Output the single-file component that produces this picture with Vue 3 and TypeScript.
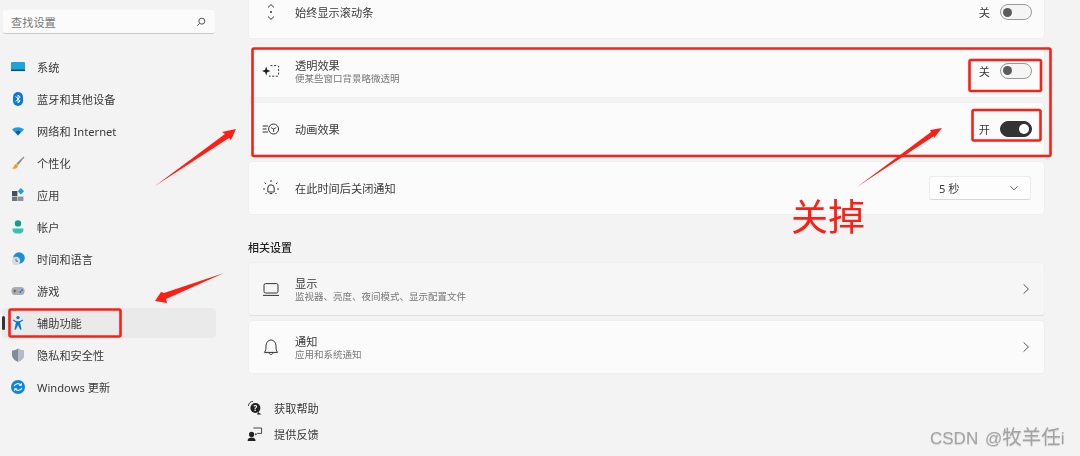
<template>
  <div class="page">
    <div class="layout">
      <aside class="sidebar">
        <div class="search">
          <span>查找设置</span>
          <svg width="10" height="10" viewBox="0 0 12 12" fill="none" stroke="#555" stroke-width="1.2">
            <circle cx="7" cy="5" r="3.6" />
            <path d="M4.4 7.6 1.4 10.6" />
          </svg>
        </div>
        <nav class="nav">
          <a v-for="item in navItems" :key="item.key" class="nav-item" :class="{ active: item.key === 'access' }">
            <svg class="nav-icon" width="16" height="16" viewBox="0 0 16 16">
              <template v-if="item.key === 'system'">
                <rect x="1" y="3" width="14" height="9" rx="1" fill="#1ea5d6" />
                <rect x="1" y="10.5" width="14" height="1.6" fill="#17506e" />
              </template>
              <template v-else-if="item.key === 'bluetooth'">
                <rect x="3" y="1" width="10" height="14" rx="5" fill="#0a78e0" />
                <path d="M5.6 5.4 10.2 10 8 12V4l2.2 2-4.6 4.6" fill="none" stroke="#fff" stroke-width="1" />
              </template>
              <template v-else-if="item.key === 'network'">
                <path d="M2 6.6C5.6 3.4 10.4 3.4 14 6.6L8 12.6Z" fill="#1b9de2" />
                <path d="M5.2 8.8C7 7.4 9 7.4 10.8 8.8L8 12.6Z" fill="#0b5f9e" />
              </template>
              <template v-else-if="item.key === 'personal'">
                <path d="M13.6 1.4 6.4 8.6 8 10.2 14.4 2.2Z" fill="#8a8f96" />
                <path d="M6 9C3.8 9.4 4.6 12.4 2 13.2 4.8 14.6 8.2 13.4 7.8 10.6Z" fill="#f09a2a" />
              </template>
              <template v-else-if="item.key === 'apps'">
                <rect x="2" y="4" width="5.4" height="5" fill="#4a5058" />
                <rect x="2" y="9.6" width="5.4" height="4.4" fill="#6c737b" />
                <rect x="8" y="9.6" width="5.4" height="4.4" fill="#8d949b" />
                <path d="M10.8 1 14 4.2 10.8 7.4 7.8 4.2Z" fill="#1b9de2" />
              </template>
              <template v-else-if="item.key === 'account'">
                <circle cx="8" cy="4.4" r="3.2" fill="#12a08c" />
                <path d="M2.6 9.4H13.4V11C13.4 13.8 10.8 14.6 8 14.6S2.6 13.8 2.6 11Z" fill="#35c4ae" />
              </template>
              <template v-else-if="item.key === 'time'">
                <circle cx="9" cy="7" r="5.8" fill="#1b8fd6" />
                <circle cx="6" cy="10" r="4.2" fill="#d8dde2" />
                <path d="M6 7.6V10.2H8" fill="none" stroke="#555" stroke-width="0.8" />
              </template>
              <template v-else-if="item.key === 'games'">
                <rect x="1.5" y="4" width="13" height="8" rx="3.6" fill="#a9aeb4" />
                <path d="M3.4 8H6.2M4.8 6.6V9.4" stroke="#555" stroke-width="0.9" />
                <circle cx="10.4" cy="9" r="0.9" fill="#1b78c8" />
                <circle cx="12" cy="7.2" r="0.9" fill="#1b78c8" />
              </template>
              <template v-else-if="item.key === 'access'">
                <circle cx="8" cy="2.6" r="1.7" fill="#0a78d4" />
                <path d="M3.2 4.6 6.6 6.2H9.4L12.8 4.6 13.2 5.6 10 7.6 11.6 14.4 10.2 14.8 8 10 5.8 14.8 4.4 14.4 6 7.6 2.8 5.6Z" fill="#0a78d4" />
              </template>
              <template v-else-if="item.key === 'privacy'">
                <path d="M8 1.4C10 3 12 3.4 14 3.4V8C14 11.4 11 13.6 8 14.8 5 13.6 2 11.4 2 8V3.4C4 3.4 6 3 8 1.4Z" fill="#7f8c99" />
                <path d="M8 1.4C10 3 12 3.4 14 3.4V8C14 11.4 11 13.6 8 14.8Z" fill="#b4bcc4" />
              </template>
              <template v-else>
                <circle cx="8" cy="8" r="7" fill="#0a86e0" />
                <path d="M4.2 7.2C4.8 4.6 8.8 3.6 11 6.2M11.8 8.8C11.2 11.4 7.2 12.4 5 9.8" fill="none" stroke="#fff" stroke-width="1.2" />
                <path d="M11.8 3.8V6.8H8.8ZM4.2 12.2V9.2H7.2Z" fill="#fff" />
              </template>
            </svg>
            <span>{{ item.label }}</span>
          </a>
        </nav>
      </aside>

      <main class="content">
        <section class="card-list">
          <div v-for="row in settingRows" :key="row.title" class="card">
            <svg class="card-icon" width="20" height="20" viewBox="0 0 20 20" fill="none" stroke="#333" stroke-width="1">
              <template v-if="row.icon === 'scroll'">
                <path d="M7 5.4 10 2.6 13 5.4M7 14.6 10 17.4 13 14.6" />
                <circle cx="10" cy="10" r="1" fill="#333" stroke="none" />
              </template>
              <template v-else-if="row.icon === 'clear'">
                <path d="M5.2 5.4 6.3 8.7 9.4 10 6.3 11.3 5.2 14.6 4.1 11.3 1 10 4.1 8.7Z" fill="#222" stroke="none" />
                <path d="M9.5 4.6H16.4Q17.6 4.6 17.6 5.8V13.8Q17.6 15.2 16.4 15.2H8" stroke-dasharray="2 1.6" />
              </template>
              <template v-else-if="row.icon === 'motion'">
                <path d="M1.6 7H7M1.6 10H5.6M1.6 13H7" />
                <circle cx="12.6" cy="10" r="5" />
                <path d="M10 8.6 12.6 10 15.2 8.6M12.6 10V13" stroke-width="0.9" />
              </template>
              <template v-else>
                <path d="M6.8 14V10A3.2 3.2 0 0 1 13.2 10V14ZM8.6 15.6H11.4" />
                <path d="M10 2V4M3.6 4.6 5 6M16.4 4.6 15 6M2 11H4M16 11H18M4.6 16 5.6 15M15.4 16 14.4 15" />
              </template>
            </svg>
            <div class="card-text">
              <div class="card-title">{{ row.title }}</div>
              <div v-if="row.sub" class="card-sub">{{ row.sub }}</div>
            </div>
            <div v-if="row.toggle" class="toggle-wrap">
              <span>{{ row.toggle === 'on' ? '开' : '关' }}</span>
              <span class="toggle" :class="row.toggle"><i></i></span>
            </div>
            <div v-else-if="row.select" class="select">
              <span>{{ row.select }}</span>
              <svg width="10" height="10" viewBox="0 0 10 10" fill="none" stroke="#666" stroke-width="1"><path d="M1.4 3.4 5 6.8 8.6 3.4" /></svg>
            </div>
          </div>
        </section>

        <h3 class="heading">相关设置</h3>

        <section class="card-list related">
          <div v-for="row in relatedRows" :key="row.title" class="card" :class="{ hover: row.icon === 'laptop' }">
            <svg class="card-icon" width="20" height="20" viewBox="0 0 20 20" fill="none" stroke="#333" stroke-width="1">
              <template v-if="row.icon === 'laptop'">
                <rect x="3" y="4.6" width="14" height="9.4" rx="1.6" />
                <path d="M2 16.4H18" />
              </template>
              <template v-else>
                <path d="M3.4 15.4C4.8 13.6 5 12 5 9.2 5 6 7 3 10 3S15 6 15 9.2C15 12 15.2 13.6 16.6 15.4Z" />
                <path d="M8 15.6C8 18 12 18 12 15.6" />
              </template>
            </svg>
            <div class="card-text">
              <div class="card-title">{{ row.title }}</div>
              <div class="card-sub">{{ row.sub }}</div>
            </div>
            <svg class="chevron" width="12" height="12" viewBox="0 0 12 12" fill="none" stroke="#555" stroke-width="1"><path d="M3.6 1.4 8.4 6 3.6 10.6" /></svg>
          </div>
        </section>

        <div class="links">
          <a class="link">
            <svg width="16" height="16" viewBox="0 0 16 16">
              <path d="M1.4 6C1.6 3 3.6 1.4 6 1.4" fill="none" stroke="#333" stroke-width="0.9" />
              <circle cx="8.4" cy="8" r="5" fill="#222" />
              <path d="M11 12 14.6 14.6H10Z" fill="#222" />
              <text x="8.4" y="10.6" class="help-mark">?</text>
            </svg>
            <span>获取帮助</span>
          </a>
          <a class="link">
            <svg width="16" height="16" viewBox="0 0 16 16">
              <circle cx="4.6" cy="8.4" r="2.6" fill="#222" />
              <path d="M0.6 15C0.6 12.4 2.4 11.4 4.6 11.4S8.6 12.4 8.6 15Z" fill="#222" />
              <path d="M6.4 2H14.6V7.4H10.4L8.6 9V7.4" fill="none" stroke="#333" stroke-width="0.9" />
            </svg>
            <span>提供反馈</span>
          </a>
        </div>
      </main>
    </div>

    <!-- hand drawn annotations on top of the screenshot -->
    <svg class="marks" width="1080" height="456" viewBox="0 0 1080 456">
      <g fill="none" stroke="#ff1e14" stroke-width="2.6" stroke-linejoin="round">
        <rect x="252.5" y="48.5" width="798" height="107.5" rx="1.5" />
        <rect x="969.5" y="60" width="71.5" height="31" rx="1.5" />
        <rect x="972.5" y="110" width="68" height="30.5" rx="1.5" />
        <rect x="9.5" y="309.5" width="111" height="27" rx="1.5" />
      </g>
      <g fill="#ff1e14">
        <polygon points="155,186 225,134 222,132 236,129 231,140 229,138" />
        <polygon points="224,273 164,293 161,292 155,301 167,303 166,299" />
        <polygon points="857,187 931,132 930,130 942,128 934,138 934,136" />
      </g>
    </svg>
    <div class="note">关掉</div>
    <div class="watermark">CSDN @<span>牧羊任</span>i</div>
  </div>
</template>

<script setup lang="ts">
interface NavItem {
  key: string
  label: string
}

interface SettingRow {
  icon: string
  title: string
  sub?: string
  toggle?: 'on' | 'off'
  select?: string
}

const navItems: NavItem[] = [
  { key: 'system', label: '系统' },
  { key: 'bluetooth', label: '蓝牙和其他设备' },
  { key: 'network', label: '网络和 Internet' },
  { key: 'personal', label: '个性化' },
  { key: 'apps', label: '应用' },
  { key: 'account', label: '帐户' },
  { key: 'time', label: '时间和语言' },
  { key: 'games', label: '游戏' },
  { key: 'access', label: '辅助功能' },
  { key: 'privacy', label: '隐私和安全性' },
  { key: 'update', label: 'Windows 更新' }
]

const settingRows: SettingRow[] = [
  { icon: 'scroll', title: '始终显示滚动条', toggle: 'off' },
  { icon: 'clear', title: '透明效果', sub: '便某些窗口背景略微透明', toggle: 'off' },
  { icon: 'motion', title: '动画效果', toggle: 'on' },
  { icon: 'sun', title: '在此时间后关闭通知', select: '5 秒' }
]

const relatedRows: SettingRow[] = [
  { icon: 'laptop', title: '显示', sub: '监视器、亮度、夜间模式、显示配置文件' },
  { icon: 'bell', title: '通知', sub: '应用和系统通知' }
]
</script>

<style scoped>
.page {
  position: relative;
  width: 1080px;
  height: 456px;
  overflow: hidden;
  background: #f3f3f3;
  color: #3a3a3a;
  font-family: "Noto Sans", "Noto Sans CJK SC", sans-serif;
  font-size: 11.2px;
}

.layout {
  display: flex;
  filter: blur(0.45px);
}

.sidebar {
  width: 248px;
  flex: none;
  box-sizing: border-box;
  padding: 10px 32px 0 2px;
}

.search {
  display: flex;
  align-items: center;
  justify-content: space-between;
  height: 24px;
  margin: 0 1px;
  padding: 0 9px 0 8px;
  box-sizing: border-box;
  background: #fbfbfb;
  border-bottom: 1px solid #c9c9c9;
  border-radius: 3px;
  color: #777;
  font-size: 11.2px;
}

.nav {
  display: flex;
  flex-direction: column;
  gap: 2px;
  margin-top: 18px;
}

.nav-item {
  position: relative;
  display: flex;
  align-items: center;
  height: 30px;
  padding-left: 8px;
  border-radius: 4px;
}

.nav-item.active {
  background: #eaeaea;
}

.nav-item.active::before {
  content: '';
  position: absolute;
  left: 0;
  top: 8px;
  width: 2.5px;
  height: 14px;
  border-radius: 2px;
  background: #333;
}

.nav-icon {
  flex: none;
  margin-right: 11px;
}

.content {
  width: 797px;
  margin-top: -15px;
}

.card-list {
  display: flex;
  flex-direction: column;
  gap: 4.5px;
}

.related {
  gap: 4px;
}

.card {
  display: flex;
  align-items: center;
  height: 54px;
  box-sizing: border-box;
  padding: 0 12px;
  background: #fbfbfb;
  border: 1px solid #efefef;
  border-radius: 4px;
}

.card.hover {
  background: #f6f6f6;
  border-bottom-color: #dedede;
}

.card-icon {
  flex: none;
  margin-right: 14px;
}

.card-text {
  flex: 1;
  min-width: 0;
  padding-top: 2px;
}

.card-title {
  line-height: 14px;
}

.card-sub {
  color: #777;
  font-size: 9.5px;
  line-height: 12px;
}

.toggle-wrap {
  display: flex;
  align-items: center;
  gap: 10px;
}

.toggle {
  display: flex;
  align-items: center;
  width: 32px;
  height: 16px;
  box-sizing: border-box;
  padding: 0 2px;
  border: 1px solid #999;
  border-radius: 8px;
  background: #f5f5f5;
}

.toggle i {
  width: 9px;
  height: 9px;
  border-radius: 50%;
  background: #5c5c5c;
}

.toggle.on {
  justify-content: flex-end;
  border-color: #333;
  background: #333;
}

.toggle.on i {
  width: 10px;
  height: 10px;
  background: #fff;
}

.select {
  display: flex;
  align-items: center;
  justify-content: space-between;
  width: 102px;
  height: 24px;
  margin-right: 1px;
  box-sizing: border-box;
  padding: 0 11px 0 9px;
  background: #fdfdfd;
  border: 1px solid #ececec;
  border-bottom-color: #d8d8d8;
  border-radius: 3px;
}

.heading {
  margin: 26.5px 0 6.5px;
  font-size: 11px;
  font-weight: 500;
  line-height: 14px;
  color: #222;
}

.links {
  display: flex;
  flex-direction: column;
  gap: 6px;
  margin-top: 24.5px;
}

.link {
  display: flex;
  align-items: center;
  gap: 11px;
  height: 20px;
  margin-left: -1px;
}

.help-mark {
  fill: #fff;
  font-size: 8px;
  font-weight: 700;
  text-anchor: middle;
}

.marks {
  position: absolute;
  inset: 0;
  pointer-events: none;
}

.note {
  position: absolute;
  left: 791px;
  top: 191px;
  color: #ff1e14;
  font-size: 37px;
  line-height: 52px;
}

.watermark {
  position: absolute;
  left: 930px;
  top: 424px;
  color: #a3a3a3;
  font-family: "Liberation Sans", "Noto Sans CJK SC", sans-serif;
  font-size: 17px;
  line-height: 26px;
  word-spacing: 2px;
  text-shadow: 0 1px 1px rgba(0, 0, 0, 0.15);
  white-space: nowrap;
}

.watermark span {
  font-size: 19.5px;
}
</style>
